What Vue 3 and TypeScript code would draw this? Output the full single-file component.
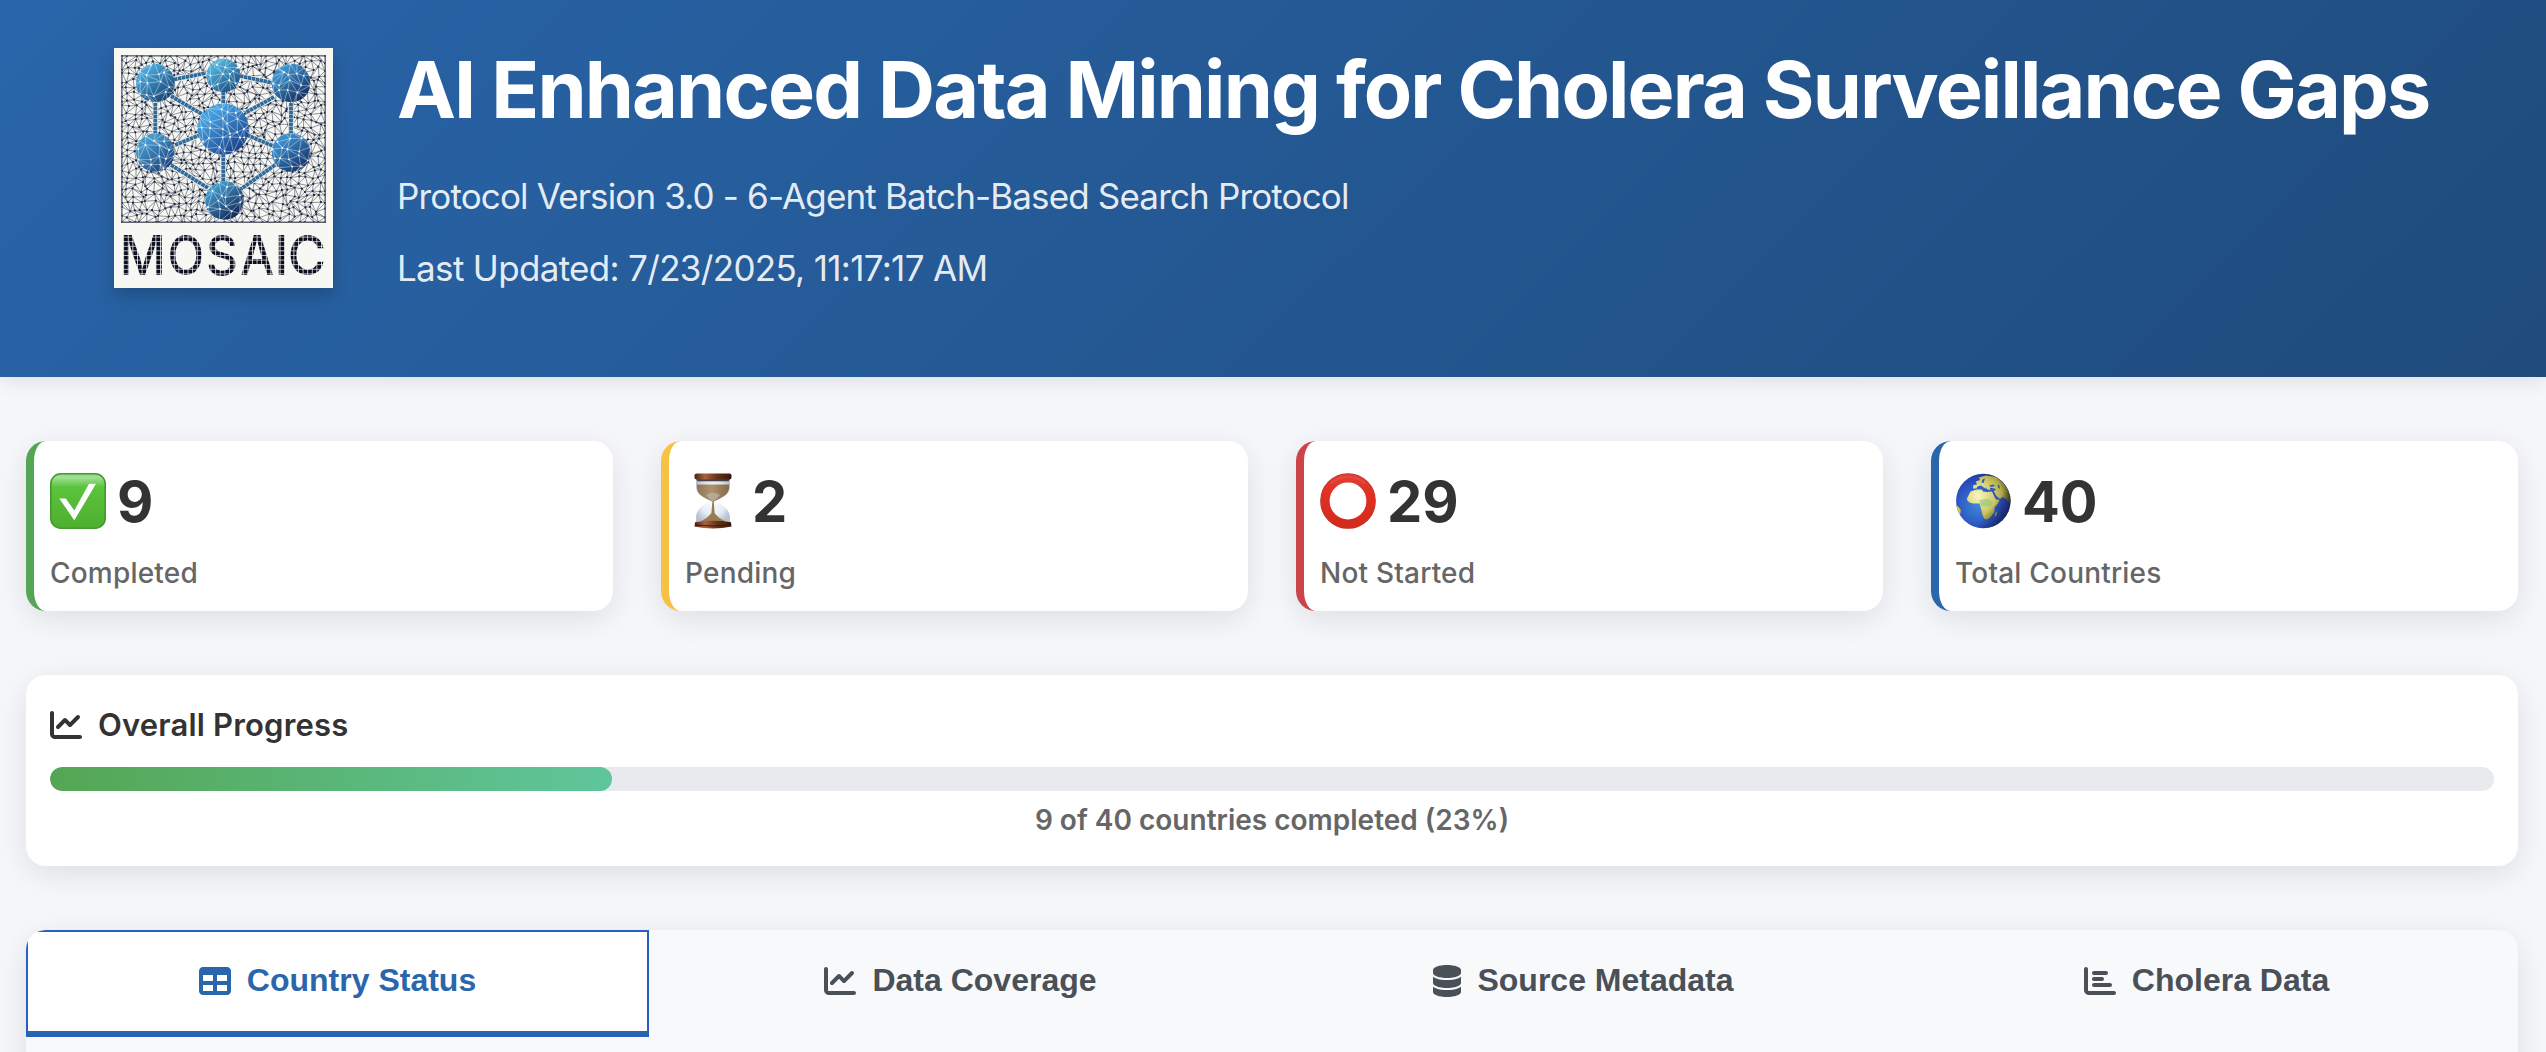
<script setup lang="ts">
interface Point { x: number; y: number }
interface Sphere { x: number; y: number; r: number; from: string; to: string }
interface Stat { key: string; value: number; label: string; color: string }
interface Tab { key: string; label: string; viewBox: string; width: number; path: string }

const chartLine =
  'M64 64c0-17.7-14.3-32-32-32S0 46.3 0 64V400c0 44.2 35.8 80 80 80H480c17.7 0 32-14.3 32-32s-14.3-32-32-32H80c-8.8 0-16-7.2-16-16V64zm406.6 86.6c12.5-12.5 12.5-32.8 0-45.3s-32.8-12.5-45.3 0L320 210.7l-57.4-57.4c-12.5-12.5-32.8-12.5-45.3 0l-112 112c-12.5 12.5-12.5 32.8 0 45.3s32.8 12.5 45.3 0L240 221.3l57.4 57.4c12.5 12.5 32.8 12.5 45.3 0l128-128z'

const stats: Stat[] = [
  { key: 'completed', value: 9, label: 'Completed', color: '#54a653' },
  { key: 'pending', value: 2, label: 'Pending', color: '#f6c244' },
  { key: 'notStarted', value: 29, label: 'Not Started', color: '#cb444a' },
  { key: 'total', value: 40, label: 'Total Countries', color: '#2a66ac' },
]

const tabs: Tab[] = [
  {
    key: 'status', label: 'Country Status', viewBox: '0 0 512 512', width: 32,
    path: 'M64 256V160H224v96H64zm0 64H224v96H64V320zm224 96V320H448v96H288zM448 256H288V160H448v96zM64 32C28.7 32 0 60.7 0 96V416c0 35.3 28.7 64 64 64H448c35.3 0 64-28.7 64-64V96c0-35.3-28.7-64-64-64H64z',
  },
  { key: 'coverage', label: 'Data Coverage', viewBox: '0 0 512 512', width: 32, path: chartLine },
  {
    key: 'metadata', label: 'Source Metadata', viewBox: '0 0 448 512', width: 28,
    path: 'M448 80v48c0 44.2-100.3 80-224 80S0 172.2 0 128V80C0 35.8 100.3 0 224 0S448 35.8 448 80zM393.2 214.7c20.8-7.4 39.9-16.9 54.8-28.6V288c0 44.2-100.3 80-224 80S0 332.2 0 288V186.1c14.9 11.8 34 21.2 54.8 28.6C99.7 230.7 159.5 240 224 240s124.3-9.3 169.2-25.3zM0 346.1c14.9 11.8 34 21.2 54.8 28.6C99.7 390.7 159.5 400 224 400s124.3-9.3 169.2-25.3c20.8-7.4 39.9-16.9 54.8-28.6V432c0 44.2-100.3 80-224 80S0 476.2 0 432V346.1z',
  },
  {
    key: 'cholera', label: 'Cholera Data', viewBox: '0 0 512 512', width: 32,
    path: 'M32 32c17.7 0 32 14.3 32 32V400c0 8.8 7.2 16 16 16H480c17.7 0 32 14.3 32 32s-14.3 32-32 32H80c-44.2 0-80-35.8-80-80V64C0 46.3 14.3 32 32 32zm96 96c0-17.7 14.3-32 32-32l192 0c17.7 0 32 14.3 32 32s-14.3 32-32 32l-192 0c-17.7 0-32-14.3-32-32zm32 64H288c17.7 0 32 14.3 32 32s-14.3 32-32 32H160c-17.7 0-32-14.3-32-32s14.3-32 32-32zm0 96H416c17.7 0 32 14.3 32 32s-14.3 32-32 32H160c-17.7 0-32-14.3-32-32s14.3-32 32-32z',
  },
]

// Deterministic generator, so the logo mesh is the same on every load
function makeRandom(seed: number) {
  let s = seed
  return () => {
    s = (s * 1664525 + 1013904223) % 4294967296
    return s / 4294967296
  }
}

// Jittered grid of points joined into triangles
function makeMesh(x0: number, y0: number, w: number, h: number, step: number, seed: number) {
  const rnd = makeRandom(seed)
  const cols = Math.round(w / step)
  const rows = Math.round(h / step)
  const grid: Point[][] = []
  for (let r = 0; r <= rows; r++) {
    const row: Point[] = []
    for (let c = 0; c <= cols; c++) {
      const jx = c === 0 || c === cols ? 0 : (rnd() - 0.5) * step * 0.85
      const jy = r === 0 || r === rows ? 0 : (rnd() - 0.5) * step * 0.85
      row.push({ x: x0 + (c * w) / cols + jx, y: y0 + (r * h) / rows + jy })
    }
    grid.push(row)
  }
  let d = ''
  const seg = (a: Point, b: Point) => {
    d += `M${a.x.toFixed(1)} ${a.y.toFixed(1)}L${b.x.toFixed(1)} ${b.y.toFixed(1)}`
  }
  for (let r = 0; r <= rows; r++) {
    for (let c = 0; c <= cols; c++) {
      if (c < cols) seg(grid[r][c], grid[r][c + 1])
      if (r < rows) seg(grid[r][c], grid[r + 1][c])
      if (r < rows && c < cols) {
        if (rnd() > 0.5) seg(grid[r][c], grid[r + 1][c + 1])
        else seg(grid[r][c + 1], grid[r + 1][c])
      }
    }
  }
  return { d, points: grid.flat() }
}

const mesh = makeMesh(8, 8, 203, 166, 6.4, 7)
const facets = makeMesh(8, 8, 203, 166, 9, 42)

const spheres: Sphere[] = [
  { x: 41.3, y: 35, r: 19.3, from: '#45a3d6', to: '#163d70' },
  { x: 109.3, y: 27.5, r: 16.8, from: '#4cafd9', to: '#1b4a80' },
  { x: 177, y: 35, r: 19.3, from: '#3c8fc9', to: '#12295c' },
  { x: 41.3, y: 104.5, r: 19.3, from: '#4799cd', to: '#173e75' },
  { x: 177, y: 104.5, r: 19.3, from: '#3c8dcb', to: '#132d63' },
  { x: 110.5, y: 152.5, r: 19.3, from: '#3f92c6', to: '#101f4c' },
  { x: 109.3, y: 81, r: 25.6, from: '#45a0e0', to: '#173a83' },
]

const links = [
  'M60 31.5L92 25', 'M126 28L159 35', 'M109.3 44V57', 'M57 48L88 66', 'M160 49L131 65',
  'M41.3 55V85', 'M177 55V85', 'M61 97L86 87', 'M133 87L159 98', 'M57 117L94 140',
  'M161 117L127 141', 'M109.3 106V134',
]

const letters = [
  { ch: 'M', x: 28.6, sx: 0.93 },
  { ch: 'O', x: 71.9, sx: 0.87 },
  { ch: 'S', x: 107.9, sx: 0.9 },
  { ch: 'A', x: 143.2, sx: 0.87 },
  { ch: 'I', x: 167.6, sx: 0.95 },
  { ch: 'C', x: 192.8, sx: 0.95 },
]

const done = 9
const totalCountries = 40
const percent = Math.round((done / totalCountries) * 100)
</script>

<template>
  <div class="page">
    <header class="header">
      <svg class="logo" viewBox="0 0 219 240" width="219" height="240">
        <defs>
          <linearGradient v-for="(s, i) in spheres" :id="`sphere${i}`" :key="i" x1="0.15" y1="0.1" x2="0.85" y2="0.95">
            <stop offset="0.15" :stop-color="s.from" />
            <stop offset="1" :stop-color="s.to" />
          </linearGradient>
          <clipPath id="sphereClip">
            <circle v-for="(s, i) in spheres" :key="i" :cx="s.x" :cy="s.y" :r="s.r" />
          </clipPath>
          <pattern id="tiles" width="4.6" height="4.6" patternUnits="userSpaceOnUse">
            <path d="M0 0H4.6M0 0V4.6" stroke="#f7f7f3" stroke-width="1.5" />
          </pattern>
        </defs>
        <rect width="219" height="240" fill="#f7f7f3" />
        <path :d="mesh.d" stroke="#4a4f5a" stroke-width="0.6" fill="none" />
        <circle v-for="(p, i) in mesh.points" :key="i" :cx="p.x" :cy="p.y" r="1.1" fill="#1b2748" />
        <rect x="7.8" y="7.8" width="203.5" height="166.6" rx="1.5" fill="none" stroke="#5b6170" stroke-width="1.1" />
        <g fill="none">
          <path v-for="d in links" :key="d" :d="d" stroke="#e9ebea" stroke-width="5.6" />
          <path v-for="d in links" :key="d + 'c'" :d="d" stroke="#2f6a99" stroke-width="3.8" stroke-dasharray="3.5 0.5" />
        </g>
        <g>
          <circle v-for="(s, i) in spheres" :key="i" :cx="s.x" :cy="s.y" :r="s.r" :fill="`url(#sphere${i})`" />
        </g>
        <g clip-path="url(#sphereClip)">
          <path :d="facets.d" stroke="#dbe9f2" stroke-width="0.6" fill="none" opacity="0.8" />
          <circle v-for="(p, i) in facets.points" :key="i" :cx="p.x" :cy="p.y" r="0.9" fill="#fff" />
        </g>
        <text
          v-for="l in letters"
          :key="l.ch"
          class="logo-letter"
          text-anchor="middle"
          :transform="`translate(${l.x} 226.5) scale(${l.sx} 1)`"
        >{{ l.ch }}</text>
        <rect x="6" y="184" width="206" height="46" fill="url(#tiles)" />
      </svg>
      <div class="heading">
        <h1>AI Enhanced Data Mining for Cholera Surveillance Gaps</h1>
        <p class="protocol">Protocol Version 3.0 - 6-Agent Batch-Based Search Protocol</p>
        <p class="updated">Last Updated: 7/23/2025, 11:17:17 AM</p>
      </div>
    </header>

    <main>
      <section class="stats">
        <article v-for="s in stats" :key="s.key" class="card stat" :style="{ borderLeftColor: s.color }">
          <div class="stat-row">
            <svg v-if="s.key === 'completed'" class="emoji" viewBox="0 0 56 56">
              <defs>
                <linearGradient id="checkBg" x1="0" y1="0" x2="0" y2="1">
                  <stop offset="0" stop-color="#86d377" />
                  <stop offset="0.06" stop-color="#a5e09a" />
                  <stop offset="0.24" stop-color="#5ac43c" />
                  <stop offset="1" stop-color="#4fae30" />
                </linearGradient>
              </defs>
              <rect x="0.8" y="0.8" width="54.4" height="54.4" rx="10" fill="url(#checkBg)" stroke="#43992c" stroke-width="1.6" />
              <path d="M9.3 25.5H15.8L24.3 37.5L39 10.8H46L24.3 47.3Z" fill="#fff" />
            </svg>
            <svg v-else-if="s.key === 'pending'" class="emoji" viewBox="0 0 56 56">
              <defs>
                <linearGradient id="wood" x1="0" y1="0" x2="1" y2="0">
                  <stop offset="0" stop-color="#4a2413" />
                  <stop offset="0.28" stop-color="#a8623e" />
                  <stop offset="0.6" stop-color="#6a3218" />
                  <stop offset="1" stop-color="#35180c" />
                </linearGradient>
                <linearGradient id="sand" x1="0" y1="0" x2="1" y2="0">
                  <stop offset="0" stop-color="#8d7458" />
                  <stop offset="0.45" stop-color="#b0926c" />
                  <stop offset="1" stop-color="#86694a" />
                </linearGradient>
                <radialGradient id="glass" cx="0.5" cy="0.45" r="0.6">
                  <stop offset="0" stop-color="#ffffff" />
                  <stop offset="0.65" stop-color="#e6edf8" />
                  <stop offset="1" stop-color="#b9c1cf" />
                </radialGradient>
              </defs>
              <path d="M11 7H45V14C45 22 37 25 30 28C37 31 45 36 45 45V49H11V45C11 36 19 31 26 28C19 25 11 22 11 14Z" fill="url(#glass)" />
              <path d="M12 11.5H44V15C44 22 36 25 29 28.5H27C20 25 12 22 12 15Z" fill="url(#sand)" />
              <path d="M21 22Q28 17 35 22Q32 26 28 28Q24 26 21 22Z" fill="#b5b3ab" opacity="0.75" />
              <path d="M27.4 28H28.7L29.6 40Q33 45 41 48.5H15Q23 45 26.4 40Z" fill="#9b7b50" />
              <path d="M10.5 5H45.5L43.5 8.3H12.5Z" fill="#4b4042" />
              <path d="M10 49.2Q28 46.5 46 49.2L46.5 53.5Q28 57.5 9.5 53.5Z" fill="url(#wood)" />
              <rect x="9.5" y="0.5" width="37" height="6" rx="2" fill="url(#wood)" />
              <path d="M10.5 52Q28 54 45.5 52" stroke="#35180d" stroke-width="0.9" fill="none" />
            </svg>
            <svg v-else-if="s.key === 'notStarted'" class="emoji" viewBox="0 0 56 56">
              <defs>
                <linearGradient id="ring" x1="0" y1="0" x2="0" y2="1">
                  <stop offset="0" stop-color="#e03d33" />
                  <stop offset="0.35" stop-color="#e03022" />
                  <stop offset="1" stop-color="#d32c1e" />
                </linearGradient>
              </defs>
              <circle cx="28" cy="28" r="27.2" stroke="#bd2c20" stroke-width="1.2" fill="none" />
              <circle cx="28" cy="28" r="22.8" stroke="url(#ring)" stroke-width="8.8" fill="none" />
              <path d="M11 10.5A24.5 24.5 0 0 1 45 10.5" stroke="#e8584e" stroke-width="2" fill="none" opacity="0.5" />
            </svg>
            <svg v-else class="emoji" viewBox="0 0 56 56">
              <defs>
                <radialGradient id="ocean" cx="0.4" cy="0.58" r="0.62">
                  <stop offset="0" stop-color="#4187d6" />
                  <stop offset="0.6" stop-color="#2d57c4" />
                  <stop offset="0.88" stop-color="#2741a8" />
                  <stop offset="1" stop-color="#1d2a66" />
                </radialGradient>
                <radialGradient id="land" gradientUnits="userSpaceOnUse" cx="23" cy="23" r="32">
                  <stop offset="0" stop-color="#f8f7c0" />
                  <stop offset="0.45" stop-color="#d8d275" />
                  <stop offset="0.75" stop-color="#b3ab45" />
                  <stop offset="1" stop-color="#55501b" />
                </radialGradient>
                <linearGradient id="shade" x1="0.3" y1="0.25" x2="0.95" y2="0.75">
                  <stop offset="0.6" stop-color="#0a1030" stop-opacity="0" />
                  <stop offset="1" stop-color="#0a1030" stop-opacity="0.6" />
                </linearGradient>
                <clipPath id="globeClip"><circle cx="28.3" cy="28" r="27.2" /></clipPath>
              </defs>
              <circle cx="28.3" cy="28" r="27.2" fill="url(#ocean)" />
              <g clip-path="url(#globeClip)">
                <path d="M12.2 25L15.5 18.5L21.5 16.6L27 16.4L28 18.5L32 19L37 18.6L40 25L41.5 26.8L44.6 26.8L43 30.5L39.6 34.3L39.4 39L35.5 44L33 46.3H29.7L27.5 42L25.8 35L24.5 30.5L18 30.5L14.5 29.5L12 27Z" fill="url(#land)" />
                <path d="M24.5 27L33 25.5L38.5 29L35 34L26 33Z" fill="#8fc47b" opacity="0.6" />
                <path d="M18 15.5L18.3 12L22 11.5L20.8 8.5L25 7L24 4.5L31 2.5L42 4L50 12L56 22V31L52.5 28L50.5 25.8L47.5 24L45 26L41.5 23L38.8 18.2L41 16L37 15L34.5 14.5L35.5 17L32.5 16.5L30 13.5L31 16L28 14L26 12.5L22.5 13.5L21.5 15.5Z" fill="url(#land)" />
                <path d="M34 12.5L38.5 11.5L40 13L36.5 14ZM42.5 11.5L44.5 12.5L44.8 16L43 14.5ZM27.5 6.5L30 5.5L28.5 10L26.6 9.4Z" fill="#2d55bd" />
                <path d="M42.3 38.5L40 40L39.8 43.5L41.2 43Z" fill="#b9a84e" />
                <path d="M0.5 32L3.2 33.5L5.8 37L5 42L3 44L0.5 40Z" fill="#d9c845" />
                <rect width="56" height="56" fill="url(#shade)" />
              </g>
            </svg>
            <span class="stat-value">{{ s.value }}</span>
          </div>
          <div class="stat-label">{{ s.label }}</div>
        </article>
      </section>

      <section class="card progress">
        <h2>
          <svg class="icon" viewBox="0 0 512 512" width="32" height="32"><path :d="chartLine" /></svg>
          Overall Progress
        </h2>
        <div class="track"><div class="fill" :style="{ width: percent + '%' }"></div></div>
        <p>{{ done }} of {{ totalCountries }} countries completed ({{ percent }}%)</p>
      </section>

      <section class="card panel">
        <nav class="tabs">
          <button v-for="(t, i) in tabs" :key="t.key" type="button" class="tab" :class="{ active: i === 0 }">
            <svg class="icon" :viewBox="t.viewBox" :width="t.width" height="32"><path :d="t.path" /></svg>
            <span>{{ t.label }}</span>
          </button>
        </nav>
      </section>
    </main>
  </div>
</template>

<style>
body {
  margin: 0;
  background: #f5f7fb;
}
</style>

<style scoped>
.page {
  height: 1052px;
  overflow: hidden;
  background: #f5f7fb;
  color: #333;
  font-family: Inter, "Liberation Sans", sans-serif;
}

.header {
  box-sizing: border-box;
  display: flex;
  align-items: flex-start;
  gap: 64px;
  height: 377px;
  padding: 48px 73px 0 114px;
  color: #fff;
  background: linear-gradient(135deg, #2965aa 0%, #1f4b7c 100%);
  box-shadow: 0 4px 20px rgba(0, 0, 0, 0.1);
}

.logo {
  flex: none;
  display: block;
  box-shadow: 0 8px 16px rgba(0, 0, 0, 0.2);
}

.logo-letter {
  font-family: Inter, sans-serif;
  font-size: 55px;
  font-weight: 500;
  fill: #0a0e1e;
}

.heading {
  margin-top: -7px;
  white-space: nowrap;
}

h1 {
  margin: 0 0 23px;
  font-size: 79px;
  font-weight: 700;
  line-height: 96px;
  letter-spacing: -1.86px;
}

.heading p {
  margin: 0;
  font-size: 35px;
  line-height: 72px;
  color: rgba(255, 255, 255, 0.9);
}

.protocol {
  letter-spacing: -0.85px;
}

.updated {
  letter-spacing: -0.68px;
}

main {
  padding: 64px 28px 0 26px;
}

.card {
  background: #fff;
  border-radius: 20px;
  box-shadow: 0 8px 32px rgba(0, 0, 0, 0.1);
}

.stats {
  display: grid;
  grid-template-columns: repeat(4, 1fr);
  gap: 48px;
}

.stat {
  box-sizing: border-box;
  height: 170px;
  padding: 27px 16px 0;
  border-left: 8px solid;
}

.stat-row {
  display: flex;
  align-items: center;
  gap: 11px;
  height: 68px;
}

.emoji {
  width: 56px;
  height: 56px;
  margin-bottom: 2px;
}

.stat-value {
  font-size: 56px;
  font-weight: 700;
  line-height: 68px;
}

.stat-label {
  margin-top: 20px;
  font-size: 28px;
  font-weight: 500;
  line-height: 34px;
  letter-spacing: 0.2px;
  color: #666;
}

.progress {
  box-sizing: border-box;
  height: 191px;
  margin-top: 64px;
  padding: 31px 24px 0;
}

.icon {
  flex: none;
  fill: currentColor;
}

h2 {
  display: flex;
  align-items: center;
  gap: 16px;
  margin: 0 0 23px;
  font-size: 31px;
  font-weight: 600;
  line-height: 38px;
  letter-spacing: 0.18px;
}

.track {
  height: 24px;
  overflow: hidden;
  border-radius: 12px;
  background: #e9eaee;
}

.fill {
  height: 100%;
  border-radius: 12px;
  background: linear-gradient(90deg, #54a653, #5fc69c);
}

.progress p {
  margin: 12px 0 0;
  font-size: 28px;
  font-weight: 600;
  line-height: 34px;
  text-align: center;
  color: #666;
}

.panel {
  height: 240px;
  margin-top: 64px;
  overflow: hidden;
  background: #f8f9fb;
}

.tabs {
  display: flex;
}

.tab {
  box-sizing: border-box;
  flex: 1;
  display: flex;
  align-items: flex-start;
  justify-content: center;
  gap: 16px;
  height: 107px;
  padding: 32px 0 0;
  border: 0;
  border-bottom: 6px solid transparent;
  background: none;
  color: #495057;
  font-family: "Liberation Sans", Arial, sans-serif;
  font-size: 32px;
  font-weight: 700;
  line-height: 37px;
}

.tab .icon {
  margin-top: 3px;
}

.tab.active {
  color: #2a66ac;
  background: #fff;
  border-bottom-color: #2a66ac;
  outline: 2px solid #275fc4;
  outline-offset: -2px;
}
</style>
